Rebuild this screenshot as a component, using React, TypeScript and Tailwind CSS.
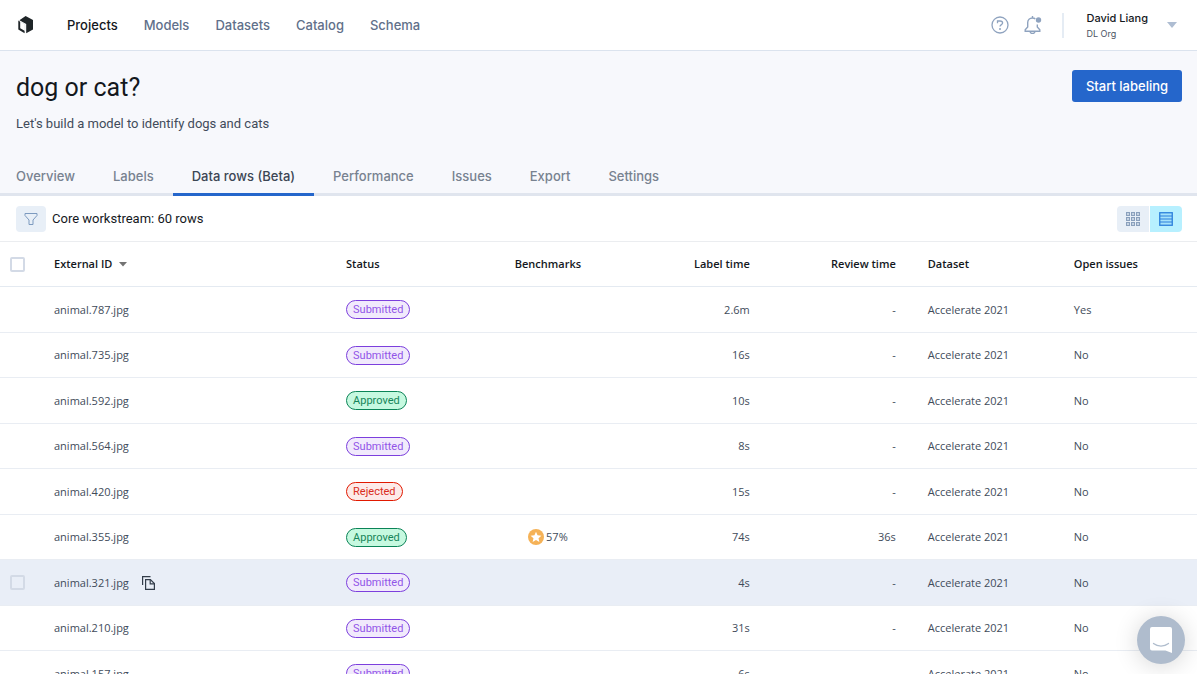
import React from "react";

type Status = "Submitted" | "Approved" | "Rejected";

interface DataRow {
  id: string;
  status: Status;
  benchmark?: string;
  labelTime: string;
  reviewTime: string;
  issues: string;
  active?: boolean;
}

const rows: DataRow[] = [
  { id: "animal.787.jpg", status: "Submitted", labelTime: "2.6m", reviewTime: "-", issues: "Yes" },
  { id: "animal.735.jpg", status: "Submitted", labelTime: "16s", reviewTime: "-", issues: "No" },
  { id: "animal.592.jpg", status: "Approved", labelTime: "10s", reviewTime: "-", issues: "No" },
  { id: "animal.564.jpg", status: "Submitted", labelTime: "8s", reviewTime: "-", issues: "No" },
  { id: "animal.420.jpg", status: "Rejected", labelTime: "15s", reviewTime: "-", issues: "No" },
  { id: "animal.355.jpg", status: "Approved", benchmark: "57%", labelTime: "74s", reviewTime: "36s", issues: "No" },
  { id: "animal.321.jpg", status: "Submitted", labelTime: "4s", reviewTime: "-", issues: "No", active: true },
  { id: "animal.210.jpg", status: "Submitted", labelTime: "31s", reviewTime: "-", issues: "No" },
  { id: "animal.157.jpg", status: "Submitted", labelTime: "6s", reviewTime: "-", issues: "No" },
];

const statusStyles: Record<Status, string> = {
  Submitted: "border-[#7c3fdd] bg-[#f1eafc] text-[#9155e8]",
  Approved: "border-[#0b8457] bg-[#c6f9e0] text-[#168559]",
  Rejected: "border-[#e11900] bg-[#fdeae8] text-[#d92d20]",
};

const navItems = ["Projects", "Models", "Datasets", "Catalog", "Schema"];
const tabs = ["Overview", "Labels", "Data rows (Beta)", "Performance", "Issues", "Export", "Settings"];

function Logo() {
  return (
    <svg width="16" height="18" viewBox="0 0 16 18" aria-hidden="true">
      <path d="M7.6 0 15 4v9.600L8.200 17.200V8L1.400 4.200Z" fill="#1f2528" />
      <path d="M0.300 4.600 2.200 5.700v6.600l4.400 2.500v2.400L0.300 13.600Z" fill="#1f2528" />
      <path d="M2.800 5.800 7 8.300v6" fill="none" stroke="#d9dcdf" strokeWidth="0.600" />
    </svg>
  );
}

function HelpIcon() {
  return (
    <svg width="18" height="18" viewBox="0 0 18 18" fill="none" stroke="#8fa3bf" strokeWidth="1.300" aria-hidden="true">
      <circle cx="9" cy="9" r="8" />
      <path d="M6.500 7.200V5H9c1.600 0 2.600.8 2.600 2.100 0 1.500-2.600 1.600-2.600 3.500" />
      <circle cx="9" cy="13" r="1" fill="#8fa3bf" stroke="none" />
    </svg>
  );
}

function BellIcon() {
  return (
    <svg width="18" height="18" viewBox="0 0 18 18" fill="none" stroke="#8fa3bf" strokeWidth="1.400" aria-hidden="true">
      <path d="M11.300 2.900C10.600 2.300 9.600 2 8.500 2 5.700 2 3.700 4 3.700 6.800V11L1.200 13.800v1.500h14.600v-1.500L13.300 11V8.500M8.500 0v2M6 15.500c.2 1.300 1.200 2 2.500 2s2.300-.7 2.500-2" />
      <circle cx="14.500" cy="4" r="2.700" fill="#8fa3bf" stroke="none" />
    </svg>
  );
}

function FilterIcon() {
  return (
    <svg width="14" height="14" viewBox="0 0 14 14" fill="none" stroke="#7d9abf" strokeWidth="1" aria-hidden="true">
      <path d="M1 1.500h12v2L9 8v4.500H5V8L1 3.500Z" />
    </svg>
  );
}

function GridIcon() {
  const steps = [0, 5, 10];
  return (
    <svg width="14" height="14" viewBox="0 0 14 14" fill="none" stroke="#8aa0bc" strokeWidth="1.200" aria-hidden="true">
      {steps.map((y) => steps.map((x) => <rect key={`${x}-${y}`} x={x + 0.6} y={y + 0.6} width="2.800" height="2.800" />))}
    </svg>
  );
}

function ListIcon() {
  return (
    <svg width="14" height="14" viewBox="0 0 14 14" fill="none" stroke="#2b7fdc" aria-hidden="true">
      <rect x="0.750" y="0.750" width="12.500" height="12.500" strokeWidth="1.300" fill="#a4e2fb" />
      <path d="M1 4h12M1 7h12M1 10h12" strokeWidth="1" />
    </svg>
  );
}

function CopyIcon() {
  return (
    <svg width="13" height="14" viewBox="0 0 13 14" fill="none" stroke="#333d4a" strokeWidth="1.200" aria-hidden="true">
      <path d="M0.600 9V0.600h7.900" />
      <path d="M3.600 3.600h4.800l4 4v5.800H3.600Z" />
      <path d="M8.200 3.600v4.200h4.200" />
    </svg>
  );
}

function StarBadge() {
  return (
    <svg width="16" height="16" viewBox="0 0 16 16" aria-hidden="true">
      <circle cx="8" cy="8" r="8" fill="#f5b257" />
      <path d="m8 2.700 1.560 3.560 3.870.38-2.910 2.570.85 3.790L8 11.020 4.630 13l.85-3.790-2.910-2.570 3.870-.38Z" fill="#fff" />
    </svg>
  );
}

function TopBar() {
  return (
    <header className="flex h-[51px] shrink-0 items-center border-b border-[#dbe3ee] bg-white pr-5 pl-[18px]">
      <a href="#home" aria-label="Home" className="mr-[33px]">
        <Logo />
      </a>
      <nav className="flex flex-1 gap-[26px] text-[13px] leading-5 font-medium text-[#61708a]">
        {navItems.map((item, i) => (
          <a key={item} href={`#${item.toLowerCase()}`} className={i === 0 ? "text-[#14181d]" : ""}>
            {item}
          </a>
        ))}
      </nav>
      <button type="button" aria-label="Help">
        <HelpIcon />
      </button>
      <button type="button" aria-label="Notifications" className="ml-[15px]">
        <BellIcon />
      </button>
      <div className="mr-[22px] ml-5 h-[25px] w-0.5 bg-[#e5ecf4]" />
      <button type="button" className="flex items-center gap-[19px] text-left">
        <span className="flex flex-col pt-0.5">
          <span className="text-[11px] leading-4 font-medium text-[#14181d]">David Liang</span>
          <span className="text-[9px] leading-4 text-[#4b5563]">DL Org</span>
        </span>
        <svg width="10" height="6" viewBox="0 0 10 6" aria-hidden="true">
          <path d="M0 0h10L5 6Z" fill="#aebdd2" />
        </svg>
      </button>
    </header>
  );
}

function ProjectHeader() {
  return (
    <section className="shrink-0 bg-[#f7f8fc]">
      <div className="flex items-start justify-between pt-[19px] pr-[15px] pl-4 font-[Roboto,sans-serif]">
        <div>
          <h1 className="text-[25px] leading-9 text-[#14181d]">dog or cat?</h1>
          <p className="mt-2 text-[13px] leading-5 text-[#414b5a]">Let's build a model to identify dogs and cats</p>
        </div>
        <button
          type="button"
          className="h-8 w-[110px] rounded-[3px] bg-[#2566cb] pt-0.5 font-[Inter,sans-serif] text-[13px] font-medium text-white"
        >
          Start labeling
        </button>
      </div>
      <nav className="mt-7 flex border-b-[3px] border-[#e0e5ee] text-[13px] leading-5 font-medium">
        {tabs.map((tab) => {
          const active = tab === "Data rows (Beta)";
          return (
            <a
              key={tab}
              href={`#${tab.split(" ")[0].toLowerCase()}`}
              aria-current={active ? "page" : undefined}
              className={
                active
                  ? "-mb-[3px] border-b-[3px] border-[#2566cb] px-[19px] pt-1 pb-[7px] text-[#3c4654]"
                  : "px-[19px] pt-1 pb-[7px] text-[#788290] first:pl-4"
              }
            >
              {tab}
            </a>
          );
        })}
      </nav>
    </section>
  );
}

function Toolbar() {
  return (
    <div className="flex h-[46px] shrink-0 items-center border-b border-[#ebedf0] pr-[15px] pl-4">
      <button type="button" aria-label="Filter" className="mr-1.5 flex h-[26px] w-[30px] items-center justify-center rounded bg-[#e8eff7]">
        <FilterIcon />
      </button>
      <p className="flex-1 font-[Roboto,sans-serif] text-[13px] text-[#14181d]">Core workstream: 60 rows</p>
      <div className="flex gap-px">
        <button type="button" aria-label="Grid view" className="flex h-[26px] w-8 items-center justify-center rounded-l bg-[#e8eff7]">
          <GridIcon />
        </button>
        <button type="button" aria-label="List view" aria-pressed="true" className="flex h-[26px] w-8 items-center justify-center rounded-r bg-[#b7f0ff]">
          <ListIcon />
        </button>
      </div>
    </div>
  );
}

function Checkbox({ label }: { label: string }) {
  return (
    <input
      type="checkbox"
      aria-label={label}
      className="block size-[15px] appearance-none rounded-[2px] border-2 border-[#d3dae6] checked:bg-[#2566cb]"
    />
  );
}

function DataTable() {
  return (
    <table className="w-full table-fixed border-separate border-spacing-0 text-left font-['Open_Sans',sans-serif] text-[11px] leading-4 text-[#414b5a] [&_td]:border-b [&_td]:border-[#e9edf3] [&_th]:border-b [&_th]:border-[#e4eaf1] [&_th]:font-semibold [&_th]:text-[#14181d]">
      <colgroup>
        <col className="w-[38px]" />
        <col className="w-[24.4%]" />
        <col className="w-[12.1%]" />
        <col className="w-[12.2%]" />
        <col className="w-[12.1%]" />
        <col className="w-[12.2%]" />
        <col className="w-[12.2%]" />
        <col />
      </colgroup>
      <thead>
        <tr className="h-[45px]">
          <th className="pl-2.5">
            <Checkbox label="Select all rows" />
          </th>
          <th className="px-4" aria-sort="descending">
            <button type="button" className="flex items-center gap-[7px] font-semibold">
              External ID
              <svg width="8" height="5" viewBox="0 0 8 5" aria-hidden="true">
                <path d="M0 0h8L4 4.500Z" fill="#737373" />
              </svg>
            </button>
          </th>
          <th className="px-4">Status</th>
          <th className="px-4 text-center">Benchmarks</th>
          <th className="px-4 text-right">Label time</th>
          <th className="px-4 text-right">Review time</th>
          <th className="px-4">Dataset</th>
          <th className="px-4">Open issues</th>
        </tr>
      </thead>
      <tbody>
        {rows.map((row) => (
          <tr key={row.id} className={row.active ? "bg-[#e9eef7] odd:h-[46px] even:h-[45px]" : "odd:h-[46px] even:h-[45px]"}>
            <td className="pl-2.5">{row.active && <Checkbox label={`Select ${row.id}`} />}</td>
            <td className="px-4">
              <div className="flex items-center gap-[13px]">
                {row.id}
                {row.active && (
                  <button type="button" aria-label="Copy ID">
                    <CopyIcon />
                  </button>
                )}
              </div>
            </td>
            <td className="px-4">
              <span className={`block w-fit rounded-full border px-1.5 font-[Roboto,sans-serif] leading-[17px] ${statusStyles[row.status]}`}>
                {row.status}
              </span>
            </td>
            <td className="px-4">
              {row.benchmark && (
                <span className="flex items-center justify-center gap-0.5">
                  <StarBadge />
                  {row.benchmark}
                </span>
              )}
            </td>
            <td className="px-4 text-right">{row.labelTime}</td>
            <td className="px-4 text-right">{row.reviewTime}</td>
            <td className="px-4">Accelerate 2021</td>
            <td className="px-4">{row.issues}</td>
          </tr>
        ))}
      </tbody>
    </table>
  );
}

function ChatLauncher() {
  return (
    <button
      type="button"
      aria-label="Open chat"
      className="fixed right-3 bottom-2.5 flex size-12 items-center justify-center rounded-full bg-[#afbccd] shadow-[0_2px_24px_rgba(0,0,0,0.16)]"
    >
      <svg width="22" height="26" viewBox="0 0 22 26" aria-hidden="true">
        <path d="M2 0h18a2 2 0 0 1 2 2v24l-6.500-2.500H2a2 2 0 0 1-2-2V2a2 2 0 0 1 2-2Z" fill="#fff" />
        <path d="M3.500 16.500c4.500 3.500 10.500 3.500 15 0" fill="none" stroke="#afbccd" strokeWidth="1.300" strokeLinecap="round" />
      </svg>
    </button>
  );
}

export default function App() {
  return (
    <div className="flex h-screen flex-col overflow-hidden bg-white font-[Inter,sans-serif]">
      <TopBar />
      <ProjectHeader />
      <Toolbar />
      <main className="min-h-0 flex-1 overflow-y-auto [scrollbar-width:none]">
        <DataTable />
      </main>
      <ChatLauncher />
    </div>
  );
}
